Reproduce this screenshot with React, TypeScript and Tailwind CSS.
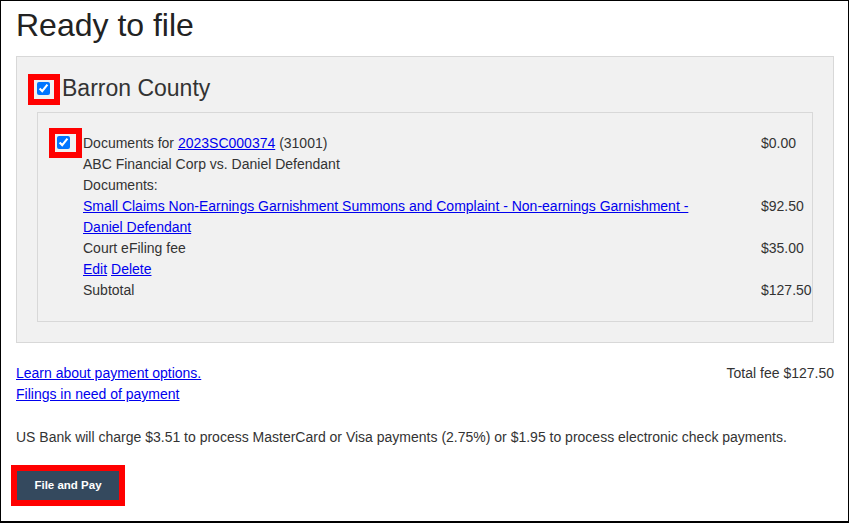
import React from "react";

const Box: React.FC<{ className: string }> = ({ className }) => (
  <span className={`pointer-events-none absolute border-[6px] border-[#ff0000] ${className}`} />
);

const rows: { text: React.ReactNode; amount?: string }[] = [
  {
    text: (
      <>
        Documents for <a href="#" className="text-[#0000ee] underline">2023SC000374</a> (31001)
      </>
    ),
    amount: "$0.00",
  },
  { text: "ABC Financial Corp vs. Daniel Defendant" },
  { text: "Documents:" },
  {
    text: (
      <a href="#" className="text-[#0000ee] underline">
        Small Claims Non-Earnings Garnishment Summons and Complaint - Non-earnings Garnishment - Daniel Defendant
      </a>
    ),
    amount: "$92.50",
  },
  { text: "Court eFiling fee", amount: "$35.00" },
  {
    text: (
      <>
        <a href="#" className="text-[#0000ee] underline">Edit</a>{" "}
        <a href="#" className="text-[#0000ee] underline">Delete</a>
      </>
    ),
  },
  { text: "Subtotal", amount: "$127.50" },
];

export default function App() {
  return (
    <div className="w-[849px] h-[523px] overflow-hidden border border-b-2 border-black bg-white pl-[15px] pr-[14px] pt-[6px] font-['Liberation_Sans',Arial,sans-serif] text-[#333] text-[14px] leading-[21px]">
      <h1 className="text-[32px] leading-[37px] font-normal text-[#222]">Ready to file</h1>

      <div className="mt-[12px] border border-[#d8d8d8] bg-[#f1f1f1] px-5 pt-[18px] pb-5">
        <div className="flex items-center h-[26px] mb-[11px]">
          <span className="relative flex">
            <input type="checkbox" defaultChecked className="w-[13px] h-[13px] accent-[#0075ff]" />
            <Box className="-left-[9px] -right-[10px] -top-[8px] -bottom-[10px]" />
          </span>
          <span className="ml-[12px] text-[23px] leading-[26px]">Barron County</span>
        </div>

        <div className="flex border border-[#d8d8d8] pl-[19px] pr-5 py-5">
          <div className="w-[26px] shrink-0 pt-[3px]">
            <span className="relative flex w-[13px]">
              <input type="checkbox" defaultChecked className="w-[13px] h-[13px] accent-[#0075ff]" />
              <Box className="-left-[8px] -right-[12px] -top-[8px] -bottom-[9px]" />
            </span>
          </div>
          <div className="flex flex-col">
            {rows.map((r, i) => (
              <div key={i} className="flex">
                <div className="w-[640px]">{r.text}</div>
                <div className="ml-[38px] w-[30px] whitespace-nowrap">{r.amount}</div>
              </div>
            ))}
          </div>
        </div>
      </div>

      <div className="mt-5 flex justify-between">
        <div className="flex flex-col">
          <a href="#" className="text-[#0000ee] underline">Learn about payment options.</a>
          <a href="#" className="text-[#0000ee] underline">Filings in need of payment</a>
        </div>
        <div>Total fee $127.50</div>
      </div>

      <p className="mt-[22px]">
        US Bank will charge $3.51 to process MasterCard or Visa payments (2.75%) or $1.95 to process electronic check payments.
      </p>

      <div className="mt-[23px] ml-px">
        <span className="relative inline-flex">
          <button className="w-[102px] h-[29px] bg-[#34495e] text-white text-[11.5px] font-bold shadow-[0_2px_4px_rgba(0,0,0,0.25)]">
            File and Pay
          </button>
          <Box className="-inset-[6px]" />
        </span>
      </div>
    </div>
  );
}
